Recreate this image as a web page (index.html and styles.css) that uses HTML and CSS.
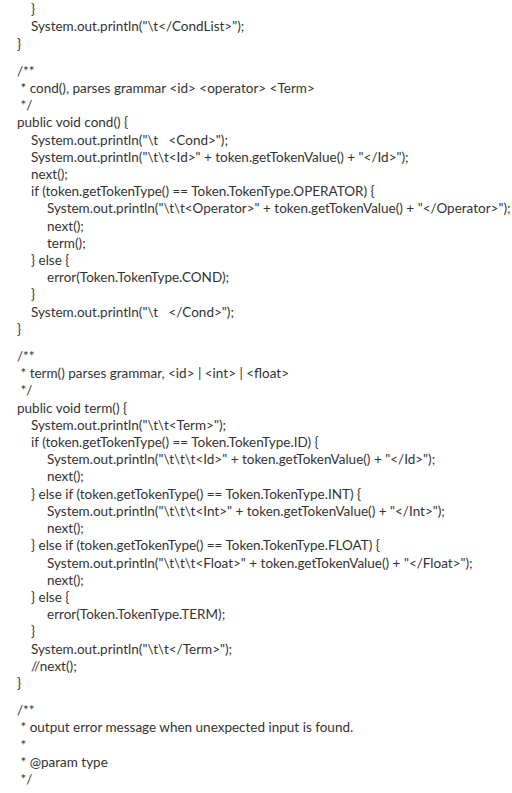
FILE: index.html
```html
<!DOCTYPE html>
<html>
<head>
<meta charset="utf-8">
<link rel="stylesheet" href="styles.css">
</head>
<body>
<div class="code">
  <div class="block first">
    <div class="ln i1">}</div>
    <div class="ln i1">}</div>
    <div class="ln i1">System.out.println("\t&lt;/CondList&gt;");</div>
    <div class="ln">}</div>
  </div>
  <div class="block">
    <div class="ln">/**</div>
    <div class="ln"> * cond(), parses grammar &lt;id&gt; &lt;operator&gt; &lt;Term&gt;</div>
    <div class="ln"> */</div>
    <div class="ln">public void cond() {</div>
    <div class="ln i1">System.out.println("\t   &lt;Cond&gt;");</div>
    <div class="ln i1">System.out.println("\t\t&lt;Id&gt;" + token.getTokenValue() + "&lt;/Id&gt;");</div>
    <div class="ln i1">next();</div>
    <div class="ln i1">if (token.getTokenType() == Token.TokenType.OPERATOR) {</div>
    <div class="ln i2">System.out.println("\t\t&lt;Operator&gt;" + token.getTokenValue() + "&lt;/Operator&gt;");</div>
    <div class="ln i2">next();</div>
    <div class="ln i2">term();</div>
    <div class="ln i1">} else {</div>
    <div class="ln i2">error(Token.TokenType.COND);</div>
    <div class="ln i1">}</div>
    <div class="ln i1">System.out.println("\t   &lt;/Cond&gt;");</div>
    <div class="ln">}</div>
  </div>
  <div class="block">
    <div class="ln">/**</div>
    <div class="ln"> * term() parses grammar, &lt;id&gt; | &lt;int&gt; | &lt;float&gt;</div>
    <div class="ln"> */</div>
    <div class="ln">public void term() {</div>
    <div class="ln i1">System.out.println("\t\t&lt;Term&gt;");</div>
    <div class="ln i1">if (token.getTokenType() == Token.TokenType.ID) {</div>
    <div class="ln i2">System.out.println("\t\t\t&lt;Id&gt;" + token.getTokenValue() + "&lt;/Id&gt;");</div>
    <div class="ln i2">next();</div>
    <div class="ln i1">} else if (token.getTokenType() == Token.TokenType.INT) {</div>
    <div class="ln i2">System.out.println("\t\t\t&lt;Int&gt;" + token.getTokenValue() + "&lt;/Int&gt;");</div>
    <div class="ln i2">next();</div>
    <div class="ln i1">} else if (token.getTokenType() == Token.TokenType.FLOAT) {</div>
    <div class="ln i2">System.out.println("\t\t\t&lt;Float&gt;" + token.getTokenValue() + "&lt;/Float&gt;");</div>
    <div class="ln i2">next();</div>
    <div class="ln i1">} else {</div>
    <div class="ln i2">error(Token.TokenType.TERM);</div>
    <div class="ln i1">}</div>
    <div class="ln i1">System.out.println("\t\t&lt;/Term&gt;");</div>
    <div class="ln i1">//next();</div>
    <div class="ln">}</div>
  </div>
  <div class="block">
    <div class="ln">/**</div>
    <div class="ln"> * output error message when unexpected input is found.</div>
    <div class="ln"> *</div>
    <div class="ln"> * @param type</div>
    <div class="ln"> */</div>
  </div>
</div>
</body>
</html>
```
FILE: styles.css
```css
html, body {
  margin: 0;
  padding: 0;
  background: #ffffff;
}
body {
  overflow: hidden;
  height: 793px;
}
.code {
  font-family: Lato, "Open Sans", sans-serif;
  font-size: 13.5px;
  line-height: 17.2px;
  color: #333333;
  padding-left: 17px;
  margin-top: -16px;
}
.block {
  margin-bottom: 10px;
}
.ln {
  white-space: pre;
}
.i1 {
  padding-left: 14px;
}
.i2 {
  padding-left: 30px;
}
```
